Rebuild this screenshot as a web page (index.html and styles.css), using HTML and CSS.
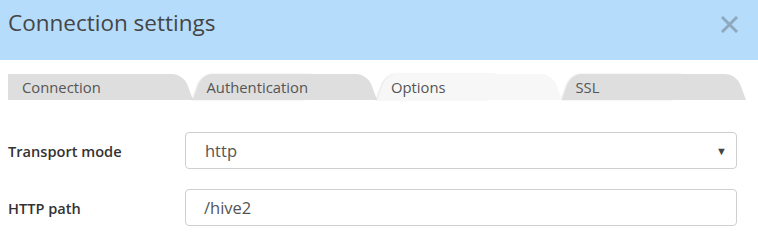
FILE: index.html
```html
<!DOCTYPE html>
<html lang="en">
<head>
    <meta charset="UTF-8">
    <title>Connection settings</title>
    <link rel="stylesheet" href="styles.css">
</head>
<body>
    <div class="dialog">
        <div class="dialog-header">
            <h1>Connection settings</h1>
            <button class="close-button" aria-label="Close">
                <svg width="17" height="17" viewBox="0 0 17 17">
                    <path d="M2 2 L15 15 M15 2 L2 15" stroke="currentColor" stroke-width="3" stroke-linecap="square"/>
                </svg>
            </button>
        </div>

        <div class="tabs">
            <div class="tab first">Connection</div>
            <div class="tab">Authentication</div>
            <div class="tab active">Options</div>
            <div class="tab">SSL</div>
        </div>

        <div class="form">
            <label for="transportMode">Transport mode</label>
            <div class="select-wrap">
                <select id="transportMode">
                    <option>http</option>
                    <option>binary</option>
                </select>
            </div>

            <label for="httpPath">HTTP path</label>
            <input type="text" id="httpPath" value="/hive2">
        </div>
    </div>
</body>
</html>
```

FILE: styles.css
```css
body {
    margin: 0;
    font-family: "Open Sans", Arial, sans-serif;
    color: #555;
    background: #fff;
}

.dialog-header {
    height: 60px;
    background-color: #b6dcfc;
    display: flex;
    justify-content: space-between;
    align-items: flex-start;
    padding: 0 20px 0 8px;
}

.dialog-header h1 {
    margin: 6px 0 0;
    font-size: 22.5px;
    font-weight: normal;
    line-height: 34px;
    color: #454545;
}

.close-button {
    margin-top: 16px;
    padding: 0;
    border: none;
    background: none;
    color: #8ea8bd;
    line-height: 0;
    cursor: pointer;
}

.tabs {
    display: flex;
    margin-top: 14px;
    padding: 0 12px 0 8px;
    height: 26px;
}

.tab {
    position: relative;
    z-index: 1;
    flex: 0 0 25%;
    box-sizing: border-box;
    padding-left: 14px;
    font-size: 14.8px;
    line-height: 26px;
    color: #555;
}

.tab::before,
.tab::after {
    content: "";
    position: absolute;
    top: 0;
    bottom: 0;
    width: 60%;
    z-index: -1;
    background: #dedede;
}

.tab::before {
    left: 0;
    transform-origin: bottom left;
    transform: skewX(-20deg);
    border-top-left-radius: 10px;
    box-shadow: -1px 0 2px rgba(0, 0, 0, 0.12);
}

.tab::after {
    right: 0;
    transform-origin: bottom right;
    transform: skewX(20deg);
    border-top-right-radius: 11px;
}

.tab.first::before {
    transform: none;
    border-radius: 0;
    box-shadow: none;
}

.tab.active {
    z-index: 2;
}

.tab.active::before,
.tab.active::after {
    background: #f7f7f7;
}

.form {
    display: grid;
    grid-template-columns: 177px 1fr;
    row-gap: 20px;
    align-items: center;
    margin-top: 32px;
    padding: 0 21px 0 8px;
}

.form label {
    font-size: 14.6px;
    font-weight: 600;
    color: #333;
}

.select-wrap {
    position: relative;
}

.select-wrap::after {
    content: "\25BC";
    position: absolute;
    right: 10px;
    top: 11px;
    font-size: 11px;
    color: #444;
    pointer-events: none;
}

.form select,
.form input {
    width: 100%;
    box-sizing: border-box;
    height: 37px;
    border: 1px solid #cfcfcf;
    border-radius: 4px;
    background: #fff;
    font-family: "Open Sans", Arial, sans-serif;
    font-size: 16.5px;
    color: #555;
    padding: 0 18px;
    outline: none;
}

.form select {
    appearance: none;
    -webkit-appearance: none;
    padding-left: 19px;
}
```
